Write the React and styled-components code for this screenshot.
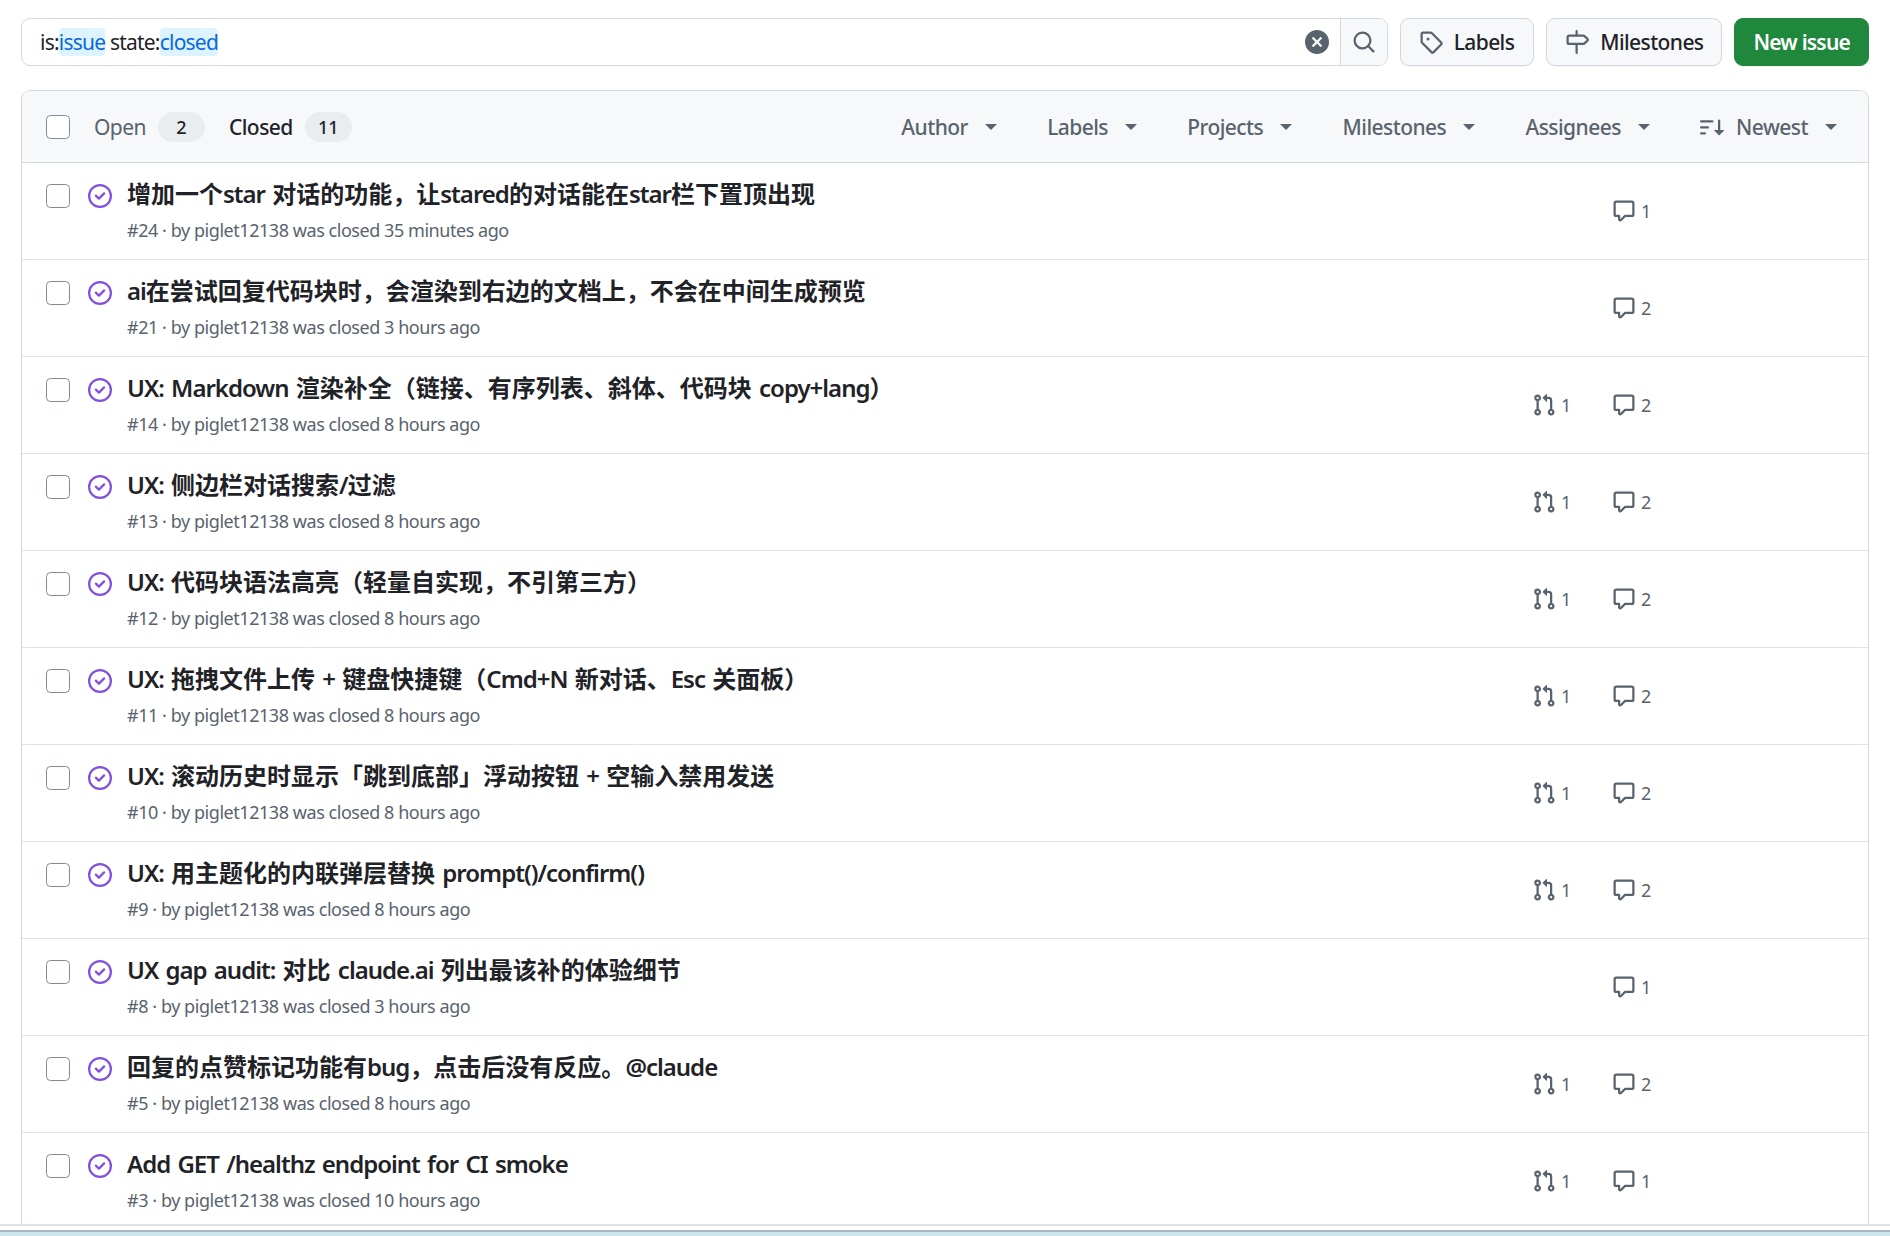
import React from 'react';
import styled, { createGlobalStyle } from 'styled-components';

const GlobalStyle = createGlobalStyle`
  html, body { margin: 0; padding: 0; height: 100%; overflow: hidden; background: #fff; }
  body { font-family: "Noto Sans", "Noto Sans CJK SC", sans-serif; color: #1f2328; }
  * { box-sizing: border-box; }
`;

const Page = styled.div`
  height: 1236px;
  display: flex;
  flex-direction: column;
  overflow: hidden;
`;
const Content = styled.main`
  flex: 1;
  min-height: 0;
  overflow: hidden;
  padding: 18px 21px 0;
`;
const BottomStrip = styled.div`
  flex: none;
  height: 12px;
  border-top: 2px solid #e2e2e2;
  background: #fff;
  padding-top: 4px;
`;
const Taskbar = styled.div`
  height: 6px;
  background: #cae5ec;
  border-top: 2px solid #a8b8bc;
`;
const Toolbar = styled.div`
  display: flex;
  align-items: stretch;
  height: 48px;
  gap: 12px;
`;
const Search = styled.div`
  flex: 1;
  display: flex;
  align-items: center;
  border: 1.5px solid #d1d9e0;
  border-radius: 9px;
  overflow: hidden;
  min-width: 0;
`;
const Query = styled.div`
  flex: 1;
  padding-left: 18px;
  font-size: 21px;
  letter-spacing: -0.78px;
  white-space: nowrap;
`;
const Token = styled.span`
  background: #ddf4ff;
  color: #0969da;
  border-radius: 4px;
`;
const ClearIcon = styled.svg`
  width: 24px;
  height: 24px;
  fill: #59636e;
  margin-right: 11px;
  flex: none;
`;
const SearchButton = styled.div`
  flex: none;
  width: 47px;
  align-self: stretch;
  display: flex;
  align-items: center;
  justify-content: center;
  background: #f6f8fa;
  border-left: 1.5px solid #d1d9e0;
`;
const Icon = styled.svg`
  width: ${p => p.$size || 24}px;
  height: ${p => p.$size || 24}px;
  fill: ${p => p.$color || '#59636e'};
  flex: none;
  display: block;
`;
const Button = styled.div`
  flex: none;
  display: flex;
  align-items: center;
  gap: 11px;
  padding: 0 ${p => p.$right || 18}px 0 18px;
  background: #f6f8fa;
  border: 1.5px solid #d1d9e0;
  border-radius: 9px;
  font-size: 21px;
  font-weight: 500;
  letter-spacing: -0.6px;
  box-shadow: 0 1px 0 rgba(31, 35, 40, 0.04);
`;
const PrimaryButton = styled(Button)`
  background: #1f883d;
  border-color: #1f883d;
  color: #fff;
  font-weight: 600;
  letter-spacing: -0.8px;
`;
const Card = styled.section`
  margin-top: 24px;
  border: 1.5px solid #d1d9e0;
  border-radius: 9px 9px 0 0;
  border-bottom: none;
  height: 1200px;
`;
const CardHeader = styled.div`
  display: flex;
  align-items: center;
  height: 72px;
  padding: 0 31px 0 24px;
  background: #f6f8fa;
  border-bottom: 1.5px solid #d1d9e0;
  border-radius: 9px 9px 0 0;
`;
const Checkbox = styled.span`
  flex: none;
  display: block;
  width: 24px;
  height: 24px;
  background: #fff;
  border: 1.5px solid #818b98;
  border-radius: 4.5px;
`;
const Tabs = styled.div`
  display: flex;
  align-items: center;
  gap: 24px;
  margin-left: 24px;
`;
const Tab = styled.div`
  display: flex;
  align-items: center;
  gap: 12px;
  font-size: 21px;
  letter-spacing: -0.55px;
  font-weight: ${p => (p.$active ? 500 : 400)};
  color: ${p => (p.$active ? '#1f2328' : '#59636e')};
`;
const Count = styled.span`
  display: flex;
  align-items: center;
  justify-content: center;
  min-width: 47px;
  height: 30px;
  padding: 0 12px;
  border-radius: 15px;
  background: #eaedf0;
  color: #1f2328;
  font-size: 18px;
  font-weight: 500;
  letter-spacing: 0;
`;
const Filters = styled.div`
  margin-left: auto;
  display: flex;
  align-items: center;
  gap: 50.25px;
`;
const Filter = styled.div`
  display: flex;
  align-items: center;
  gap: 12px;
  font-size: 21px;
  font-weight: 500;
  letter-spacing: -0.55px;
  color: #59636e;
`;
const Caret = styled.span`
  display: block;
  width: 0;
  height: 0;
  margin-left: 5px;
  border-left: 6px solid transparent;
  border-right: 6px solid transparent;
  border-top: 6px solid #59636e;
`;
const Row = styled.article`
  display: flex;
  align-items: flex-start;
  height: 97px;
  padding-left: 24px;
  border-bottom: 1.5px solid #dfe4e9;
`;
const RowCheck = styled.div`
  flex: none;
  margin-top: 21px;
`;
const StateIcon = styled.div`
  flex: none;
  margin: 21px 0 0 18px;
`;
const Main = styled.div`
  flex: 1;
  min-width: 0;
  margin-left: 15px;
  padding-top: 13px;
`;
const Title = styled.h3`
  margin: 0;
  font-size: 24px;
  line-height: 36px;
  font-weight: 600;
  color: #1f2328;
  white-space: nowrap;
`;
const Latin = styled.span`
  letter-spacing: -1px;
  word-spacing: 2px;
`;
const Meta = styled.div`
  font-size: 18px;
  line-height: 36px;
  letter-spacing: -0.45px;
  color: #59636e;
  white-space: nowrap;
`;
const Metric = styled.div`
  flex: none;
  align-self: center;
  width: ${p => p.$width}px;
  display: flex;
  align-items: center;
  gap: 5px;
  font-size: 18px;
  color: #59636e;
`;
const Spacer = styled.div`
  flex: none;
  width: 214px;
`;

const paths = {
  closed: 'M11.28 6.78a.75.75 0 0 0-1.06-1.06L7.25 8.69 5.78 7.22a.75.75 0 0 0-1.06 1.06l2 2a.75.75 0 0 0 1.06 0l3.5-3.5ZM16 8A8 8 0 1 1 0 8a8 8 0 0 1 16 0Zm-1.5 0a6.5 6.5 0 1 0-13 0 6.5 6.5 0 0 0 13 0Z',
  tag: 'M1 7.775V2.75C1 1.784 1.784 1 2.75 1h5.025c.464 0 .91.184 1.238.513l6.25 6.25a1.75 1.75 0 0 1 0 2.474l-5.026 5.026a1.75 1.75 0 0 1-2.474 0l-6.25-6.25A1.752 1.752 0 0 1 1 7.775Zm1.5 0c0 .066.026.13.073.177l6.25 6.25a.25.25 0 0 0 .354 0l5.025-5.025a.25.25 0 0 0 0-.354l-6.25-6.25a.25.25 0 0 0-.177-.073H2.75a.25.25 0 0 0-.25.25ZM6 5a1 1 0 1 1 0 2 1 1 0 0 1 0-2Z',
  milestone: 'M7.75 0a.75.75 0 0 1 .75.75V3h3.634c.414 0 .814.147 1.13.414l2.07 1.75a1.75 1.75 0 0 1 0 2.672l-2.07 1.75a1.75 1.75 0 0 1-1.13.414H8.5v5.25a.75.75 0 0 1-1.5 0V10H2.75A1.75 1.75 0 0 1 1 8.25v-3.5C1 3.784 1.784 3 2.75 3H7V.75A.75.75 0 0 1 7.75 0Zm4.384 8.5a.25.25 0 0 0 .161-.06l2.07-1.75a.248.248 0 0 0 0-.38l-2.07-1.75a.25.25 0 0 0-.161-.06H2.75a.25.25 0 0 0-.25.25v3.5c0 .138.112.25.25.25h9.384Z',
  search: 'M10.68 11.74a6 6 0 0 1-7.922-8.982 6 6 0 0 1 8.982 7.922l3.04 3.04a.749.749 0 0 1-.326 1.275.749.749 0 0 1-.734-.215ZM11.5 7a4.499 4.499 0 1 0-8.997 0A4.499 4.499 0 0 0 11.5 7Z',
  clear: 'M2.343 13.657A8 8 0 1 1 13.658 2.343 8 8 0 0 1 2.343 13.657ZM6.03 4.97a.751.751 0 0 0-1.042.018.751.751 0 0 0-.018 1.042L6.94 8 4.97 9.97a.749.749 0 0 0 .326 1.275.749.749 0 0 0 .734-.215L8 9.06l1.97 1.97a.749.749 0 0 0 1.275-.326.749.749 0 0 0-.215-.734L9.06 8l1.97-1.97a.749.749 0 0 0-.326-1.275.749.749 0 0 0-.734.215L8 6.94Z',
  comment: 'M1 2.75C1 1.784 1.784 1 2.75 1h10.5c.966 0 1.75.784 1.75 1.75v7.5A1.75 1.75 0 0 1 13.25 12H9.06l-2.573 2.573A1.458 1.458 0 0 1 4 13.543V12H2.75A1.75 1.75 0 0 1 1 10.25Zm1.75-.25a.25.25 0 0 0-.25.25v7.5c0 .138.112.25.25.25h2a.75.75 0 0 1 .75.75v2.19l2.72-2.72a.749.749 0 0 1 .53-.22h4.5a.25.25 0 0 0 .25-.25v-7.5a.25.25 0 0 0-.25-.25Z',
  pr: 'M1.5 3.25a2.25 2.25 0 1 1 3 2.122v5.256a2.251 2.251 0 1 1-1.5 0V5.372A2.25 2.25 0 0 1 1.5 3.25Zm5.677-.177L9.573.677A.25.25 0 0 1 10 .854V2.5h1A2.5 2.5 0 0 1 13.5 5v5.628a2.251 2.251 0 1 1-1.5 0V5a1 1 0 0 0-1-1h-1v1.646a.25.25 0 0 1-.427.177L7.177 3.427a.25.25 0 0 1 0-.354ZM3.75 2.5a.75.75 0 1 0 0 1.5.75.75 0 0 0 0-1.5Zm0 9.5a.75.75 0 1 0 0 1.5.75.75 0 0 0 0-1.5Zm8.25.75a.75.75 0 1 0 1.5 0 .75.75 0 0 0-1.5 0Z',
  sort: 'M0 4.25a.75.75 0 0 1 .75-.75h7.5a.75.75 0 0 1 0 1.5H.75A.75.75 0 0 1 0 4.25Zm0 4a.75.75 0 0 1 .75-.75h4.5a.75.75 0 0 1 0 1.5H.75A.75.75 0 0 1 0 8.25Zm0 4a.75.75 0 0 1 .75-.75h2.5a.75.75 0 0 1 0 1.5H.75a.75.75 0 0 1-.75-.75ZM13.5 10h2.25a.25.25 0 0 1 .177.427l-3 3a.25.25 0 0 1-.354 0l-3-3A.25.25 0 0 1 9.75 10H12V3.75a.75.75 0 0 1 1.5 0V10Z',
};

const Oct = ({ name, size, color }) => (
  <Icon viewBox="0 0 16 16" $size={size} $color={color} aria-hidden="true">
    <path d={paths[name]} />
  </Icon>
);

const splitRuns = text =>
  text.split(/([\x00-\x7f]+)/).filter(Boolean).map((part, idx) =>
    /^[\x00-\x7f]+$/.test(part) ? <Latin key={idx}>{part}</Latin> : <React.Fragment key={idx}>{part}</React.Fragment>
  );

const issues = [
  { t: '增加一个star 对话的功能，让stared的对话能在star栏下置顶出现', n: 24, a: '35 minutes', pr: 0, c: 1 },
  { t: 'ai在尝试回复代码块时，会渲染到右边的文档上，不会在中间生成预览', n: 21, a: '3 hours', pr: 0, c: 2 },
  { t: 'UX: Markdown 渲染补全（链接、有序列表、斜体、代码块 copy+lang）', n: 14, a: '8 hours', pr: 1, c: 2 },
  { t: 'UX: 侧边栏对话搜索/过滤', n: 13, a: '8 hours', pr: 1, c: 2 },
  { t: 'UX: 代码块语法高亮（轻量自实现，不引第三方）', n: 12, a: '8 hours', pr: 1, c: 2 },
  { t: 'UX: 拖拽文件上传 + 键盘快捷键（Cmd+N 新对话、Esc 关面板）', n: 11, a: '8 hours', pr: 1, c: 2 },
  { t: 'UX: 滚动历史时显示「跳到底部」浮动按钮 + 空输入禁用发送', n: 10, a: '8 hours', pr: 1, c: 2 },
  { t: 'UX: 用主题化的内联弹层替换 prompt()/confirm()', n: 9, a: '8 hours', pr: 1, c: 2 },
  { t: 'UX gap audit: 对比 claude.ai 列出最该补的体验细节', n: 8, a: '3 hours', pr: 0, c: 1 },
  { t: '回复的点赞标记功能有bug，点击后没有反应。@claude', n: 5, a: '8 hours', pr: 1, c: 2 },
  { t: 'Add GET /healthz endpoint for CI smoke', n: 3, a: '10 hours', pr: 1, c: 1 },
];

const filters = ['Author', 'Labels', 'Projects', 'Milestones', 'Assignees'];

export default function App() {
  return (
    <Page>
      <GlobalStyle />
      <Content>
        <Toolbar>
          <Search>
            <Query>is:<Token>issue</Token> state:<Token>closed</Token></Query>
            <ClearIcon viewBox="0 0 16 16" aria-hidden="true"><path d={paths.clear} /></ClearIcon>
            <SearchButton><Oct name="search" /></SearchButton>
          </Search>
          <Button $right={19}><Oct name="tag" />Labels</Button>
          <Button><Oct name="milestone" />Milestones</Button>
          <PrimaryButton>New issue</PrimaryButton>
        </Toolbar>
        <Card>
          <CardHeader>
            <Checkbox />
            <Tabs>
              <Tab>Open<Count>2</Count></Tab>
              <Tab $active>Closed<Count>11</Count></Tab>
            </Tabs>
            <Filters>
              {filters.map(f => (
                <Filter key={f}>{f}<Caret /></Filter>
              ))}
              <Filter><Oct name="sort" />Newest<Caret /></Filter>
            </Filters>
          </CardHeader>
          {issues.map(i => (
            <Row key={i.n}>
              <RowCheck><Checkbox /></RowCheck>
              <StateIcon><Oct name="closed" color="#8250df" /></StateIcon>
              <Main>
                <Title>{splitRuns(i.t)}</Title>
                <Meta>#{i.n} · by piglet12138 was closed {i.a} ago</Meta>
              </Main>
              <Metric $width={80}>
                {i.pr > 0 && (<><Oct name="pr" />{i.pr}</>)}
              </Metric>
              <Metric $width={42}><Oct name="comment" />{i.c}</Metric>
              <Spacer />
            </Row>
          ))}
        </Card>
      </Content>
      <BottomStrip><Taskbar /></BottomStrip>
    </Page>
  );
}
